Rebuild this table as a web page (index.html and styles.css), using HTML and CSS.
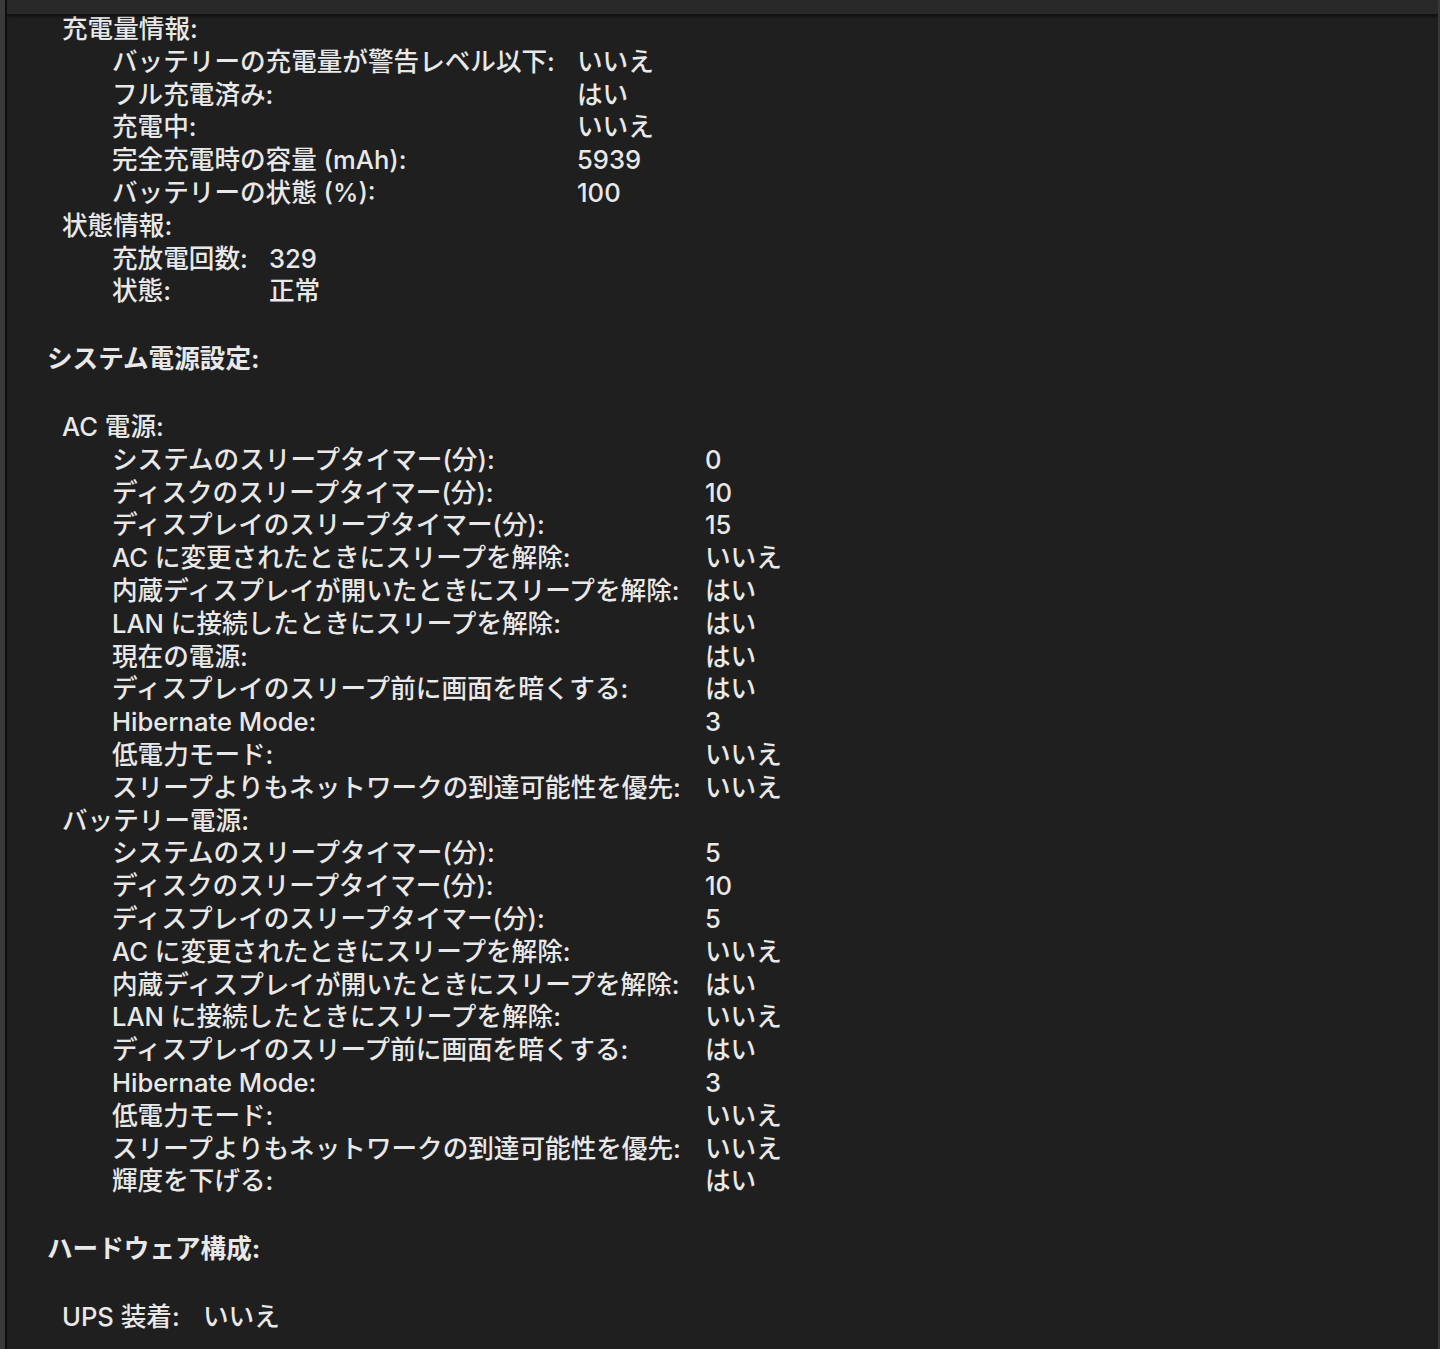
FILE: index.html
```html
<!DOCTYPE html>
<html lang="ja">
<head>
    <meta charset="UTF-8">
    <meta name="viewport" content="width=device-width, initial-scale=1.0">
    <title>電源</title>
    <link rel="stylesheet" href="styles.css">
</head>
<body>
    <div class="window">
        <div class="sidebar-edge"></div>
        <div class="main">
            <div class="toolbar"></div>
            <div class="report">
                <div class="sub">充電量情報:</div>
                <div class="rows charge">
                    <span>バッテリーの充電量が警告レベル以下:</span><span>いいえ</span>
                    <span>フル充電済み:</span><span>はい</span>
                    <span>充電中:</span><span>いいえ</span>
                    <span>完全充電時の容量 (mAh):</span><span>5939</span>
                    <span>バッテリーの状態 (%):</span><span>100</span>
                </div>
                <div class="sub">状態情報:</div>
                <div class="rows health">
                    <span>充放電回数:</span><span>329</span>
                    <span>状態:</span><span>正常</span>
                </div>

                <div class="section">システム電源設定:</div>

                <div class="sub">AC 電源:</div>
                <div class="rows power">
                    <span>システムのスリープタイマー(分):</span><span>0</span>
                    <span>ディスクのスリープタイマー(分):</span><span>10</span>
                    <span>ディスプレイのスリープタイマー(分):</span><span>15</span>
                    <span>AC に変更されたときにスリープを解除:</span><span>いいえ</span>
                    <span>内蔵ディスプレイが開いたときにスリープを解除:</span><span>はい</span>
                    <span>LAN に接続したときにスリープを解除:</span><span>はい</span>
                    <span>現在の電源:</span><span>はい</span>
                    <span>ディスプレイのスリープ前に画面を暗くする:</span><span>はい</span>
                    <span>Hibernate Mode:</span><span>3</span>
                    <span>低電力モード:</span><span>いいえ</span>
                    <span>スリープよりもネットワークの到達可能性を優先:</span><span>いいえ</span>
                </div>
                <div class="sub">バッテリー電源:</div>
                <div class="rows power">
                    <span>システムのスリープタイマー(分):</span><span>5</span>
                    <span>ディスクのスリープタイマー(分):</span><span>10</span>
                    <span>ディスプレイのスリープタイマー(分):</span><span>5</span>
                    <span>AC に変更されたときにスリープを解除:</span><span>いいえ</span>
                    <span>内蔵ディスプレイが開いたときにスリープを解除:</span><span>はい</span>
                    <span>LAN に接続したときにスリープを解除:</span><span>いいえ</span>
                    <span>ディスプレイのスリープ前に画面を暗くする:</span><span>はい</span>
                    <span>Hibernate Mode:</span><span>3</span>
                    <span>低電力モード:</span><span>いいえ</span>
                    <span>スリープよりもネットワークの到達可能性を優先:</span><span>いいえ</span>
                    <span>輝度を下げる:</span><span>はい</span>
                </div>

                <div class="section">ハードウェア構成:</div>

                <div class="rows ups">
                    <span>UPS 装着:</span><span>いいえ</span>
                </div>
            </div>
        </div>
    </div>
</body>
</html>
```

FILE: styles.css
```css
html, body {
    margin: 0;
    height: 100%;
    background: #1f1f1f;
}

body {
    font-family: Inter, "Noto Sans CJK JP", sans-serif;
    font-size: 25.6px;
    font-weight: 500;
    line-height: 32.8px;
    color: #e8e8e8;
}

.window {
    display: flex;
    min-height: 100%;
}

.sidebar-edge {
    width: 5px;
    flex-shrink: 0;
    background: #3a3a3a;
    border-right: 2px solid #0e0e0e;
}

.main {
    flex: 1;
    border-right: 2px solid #383838;
    overflow: hidden;
}

.toolbar {
    height: 14px;
    background: #292929;
    border-bottom: 2px solid #121212;
    box-shadow: 0 1px 2px rgba(0, 0, 0, 0.35);
    position: relative;
    z-index: 1;
}

.report {
    margin-top: -3px;
    padding-left: 40px;
}

.section {
    font-weight: bold;
    margin: 35px 0;
}

.sub {
    padding-left: 15px;
}

.rows {
    display: grid;
    padding-left: 65px;
}

.charge {
    grid-template-columns: 465px auto;
}

.health {
    grid-template-columns: 157px auto;
}

.power {
    grid-template-columns: 593px auto;
}

.ups {
    padding-left: 15px;
    grid-template-columns: 141px auto;
}
```
